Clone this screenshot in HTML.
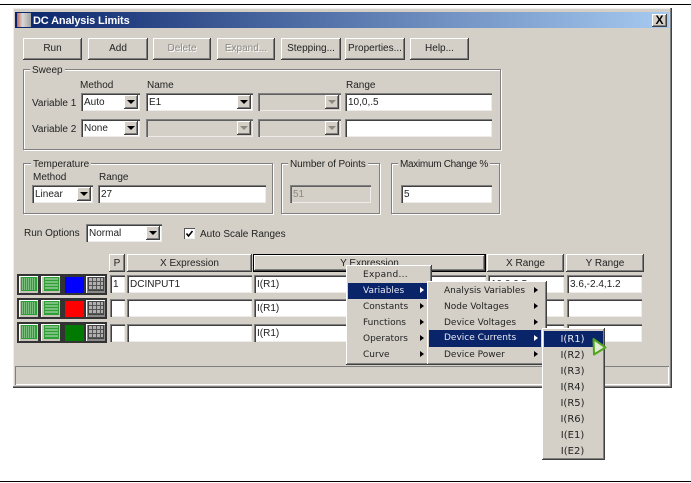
<!DOCTYPE html>
<html><head><meta charset="utf-8">
<style>
html,body{margin:0;padding:0;background:#fff}
#r{position:relative;width:691px;height:483px;overflow:hidden;background:#fff;font:10px "Liberation Sans",sans-serif;color:#222;filter:blur(.3px)}
#r div,#r span{position:absolute;box-sizing:border-box;white-space:nowrap}
.b{background:#d4d0c8;box-shadow:inset -1px -1px #404040,inset 1px 1px #fff,inset -2px -2px #808080;text-align:center;line-height:22px}
.dis{color:#8a8880;text-shadow:1px 1px #fff}
.i{background:#fff;box-shadow:inset 1px 1px #808080,inset 2px 2px #404040,inset -1px -1px #eeece8;line-height:19px;padding-left:3px}
.off{background:#d4d0c8;color:#8a8880;box-shadow:inset 1px 1px #808080,inset 2px 2px #606060,inset -1px -1px #eeece8}
.a{right:2px;top:2px;width:14px;height:14px;background:#d4d0c8;box-shadow:inset -1px -1px #404040,inset 1px 1px #fff,inset -2px -2px #808080}
.a:after{content:"";position:absolute;left:3px;top:5px;border:4px solid transparent;border-top:4px solid #000;border-bottom:0}
.a.g:after{border-top-color:#8a8880}
.g1{border:1px solid #808080;box-shadow:inset 1px 1px #fff,1px 1px #fff}
.l{background:#d4d0c8;padding:0 2px;height:12px;line-height:12px}
.t{line-height:12px;height:12px}
.h{background:#d4d0c8;box-shadow:inset -1px -1px #404040,inset 1px 1px #fff,inset -2px -2px #808080;text-align:center;line-height:19px}
.ib{width:23px;height:21px;background:#c8c4bc;border:2px solid #333;box-shadow:inset 1px 1px #fff}
.ib i{position:absolute;left:2px;top:1px;width:16px;height:14px;display:block}
.v{background:repeating-linear-gradient(90deg,#2c9f35 0,#2c9f35 1px,#7cc07f 1px,#7cc07f 2px);outline:1px solid #2c9f35;outline-offset:-1px}
.z{background:repeating-linear-gradient(180deg,#2c9f35 0,#2c9f35 1px,#7cc07f 1px,#7cc07f 3px);outline:1px solid #2c9f35;outline-offset:-1px}
.ib.cb{background:#777;box-shadow:none}
.ib.cb i{left:0;top:0;width:19px;height:16px;border:1px solid #333}
.k{background:repeating-linear-gradient(90deg,#555 0,#555 1px,transparent 1px,transparent 4px),repeating-linear-gradient(180deg,#555 0,#555 1px,#b0b0b0 1px,#b0b0b0 4px);outline:1px solid #444;outline-offset:-1px}
.ibg{background:#888}
.m{background:#d4d0c8;box-shadow:inset -1px -1px #404040,inset 1px 1px #fff,inset -2px -2px #808080;font:9px "DejaVu Sans",sans-serif;color:#222}
.mi{left:2px;height:16px;line-height:17px}
.sel{background:#0a246a;color:#e8e8f0}
.ar{width:0;height:0;border:3.5px solid transparent;border-left:4px solid #000;border-right:0}
.rule{left:0;width:691px;height:1px;background:#000}
</style></head><body>
<div id="r">
<div class="rule" style="top:4px"></div>
<div class="rule" style="top:481px"></div>

<div style="left:13px;top:8px;width:659px;height:380px;background:#d4d0c8;box-shadow:inset -1px -1px #404040,inset -2px -2px #808080,inset 1px 1px #eee"></div>
<div style="left:15px;top:12px;width:654px;height:16px;background:linear-gradient(90deg,#0a246a,#a6caf0)"></div>
<div style="left:17px;top:13px;width:14px;height:14px;background:linear-gradient(90deg,#c46a5a,#d8d8d8 40%,#a0a0a0)"></div>
<div style="left:33px;top:13px;height:16px;line-height:16px;color:#fff;font-weight:bold;font-size:11px;letter-spacing:-.15px">DC Analysis Limits</div>
<div class="b" style="left:652px;top:14px;width:15px;height:13px;font:bold 12px/13px 'Liberation Sans',sans-serif;color:#000">X</div>

<div class="b" style="left:23px;top:38px;width:59px;height:22px">Run</div>
<div class="b" style="left:88px;top:38px;width:60px;height:22px">Add</div>
<div class="b dis" style="left:153px;top:38px;width:58px;height:22px">Delete</div>
<div class="b dis" style="left:217px;top:38px;width:58px;height:22px">Expand...</div>
<div class="b" style="left:281px;top:38px;width:60px;height:22px">Stepping...</div>
<div class="b" style="left:345px;top:38px;width:60px;height:22px">Properties...</div>
<div class="b" style="left:410px;top:38px;width:59px;height:22px">Help...</div>

<div class="g1" style="left:23px;top:69px;width:478px;height:81px"></div>
<div class="l" style="left:30px;top:65px">Sweep</div>
<div class="t" style="left:80px;top:80px">Method</div>
<div class="t" style="left:147px;top:80px">Name</div>
<div class="t" style="left:346px;top:80px">Range</div>
<div class="t" style="left:32px;top:98px">Variable 1</div>
<div class="t" style="left:32px;top:124px">Variable 2</div>
<div class="i" style="left:81px;top:93px;width:59px;height:18px">Auto<span class="a"></span></div>
<div class="i" style="left:146px;top:93px;width:107px;height:18px">E1<span class="a"></span></div>
<div class="i off" style="left:258px;top:93px;width:83px;height:18px"><span class="a g"></span></div>
<div class="i" style="left:345px;top:93px;width:147px;height:18px">10,0,.5</div>
<div class="i" style="left:81px;top:119px;width:59px;height:18px">None<span class="a"></span></div>
<div class="i off" style="left:146px;top:119px;width:107px;height:18px"><span class="a g"></span></div>
<div class="i off" style="left:258px;top:119px;width:83px;height:18px"><span class="a g"></span></div>
<div class="i" style="left:345px;top:119px;width:147px;height:18px"></div>

<div class="g1" style="left:23px;top:163px;width:250px;height:51px"></div>
<div class="l" style="left:31px;top:159px">Temperature</div>
<div class="t" style="left:33px;top:172px">Method</div>
<div class="t" style="left:99px;top:172px">Range</div>
<div class="i" style="left:32px;top:185px;width:61px;height:18px">Linear<span class="a"></span></div>
<div class="i" style="left:98px;top:185px;width:168px;height:18px">27</div>

<div class="g1" style="left:281px;top:163px;width:99px;height:51px"></div>
<div class="l" style="left:288px;top:159px;letter-spacing:-.1px">Number of Points</div>
<div class="i off" style="left:290px;top:185px;width:81px;height:18px">51</div>

<div class="g1" style="left:391px;top:163px;width:109px;height:51px"></div>
<div class="l" style="left:398px;top:159px;letter-spacing:-.3px">Maximum Change %</div>
<div class="i" style="left:401px;top:185px;width:91px;height:18px">5</div>

<div class="t" style="left:24px;top:228px">Run Options</div>
<div class="i" style="left:86px;top:224px;width:76px;height:18px">Normal<span class="a"></span></div>
<div style="left:184px;top:228px;width:11px;height:11px;background:#fff;box-shadow:inset 1px 1px #555,inset -1px -1px #eee"></div>
<svg style="position:absolute;left:184px;top:228px" width="11" height="11"><path d="M2.5 5.5L4.5 8L8.5 3" fill="none" stroke="#000" stroke-width="1.6"/></svg>
<div class="t" style="left:200px;top:229px">Auto Scale Ranges</div>

<div class="h" style="left:109px;top:254px;width:16px;height:18px">P</div>
<div class="h" style="left:127px;top:254px;width:125px;height:18px">X Expression</div>
<div class="h" style="left:253px;top:254px;width:233px;height:18px;border:1px solid #000;line-height:17px">Y Expression</div>
<div class="h" style="left:487px;top:254px;width:77px;height:18px">X Range</div>
<div class="h" style="left:566px;top:254px;width:78px;height:18px">Y Range</div>

<div class="ib" style="left:17px;top:274px"><i class="v"></i></div>
<div class="ib" style="left:39px;top:274px"><i class="z" style="left:3px;width:15px"></i></div>
<div class="ib cb" style="left:62px;top:274px"><i style="background:#0000ff"></i></div>
<div class="ib ibg" style="left:84px;top:274px"><i class="k"></i></div>
<div class="ib" style="left:17px;top:298px"><i class="v"></i></div>
<div class="ib" style="left:39px;top:298px"><i class="z" style="left:3px;width:15px"></i></div>
<div class="ib cb" style="left:62px;top:298px"><i style="background:#ff0000"></i></div>
<div class="ib ibg" style="left:84px;top:298px"><i class="k"></i></div>
<div class="ib" style="left:17px;top:322px"><i class="v"></i></div>
<div class="ib" style="left:39px;top:322px"><i class="z" style="left:3px;width:15px"></i></div>
<div class="ib cb" style="left:62px;top:322px"><i style="background:#007a00"></i></div>
<div class="ib ibg" style="left:84px;top:322px"><i class="k"></i></div>

<div class="i" style="left:110px;top:275px;width:15px;height:18px">1</div>
<div class="i" style="left:127px;top:275px;width:125px;height:18px">DCINPUT1</div>
<div class="i" style="left:254px;top:275px;width:232px;height:18px">I(R1)</div>
<div class="i" style="left:488px;top:275px;width:76px;height:18px">10,0,0,5</div>
<div class="i" style="left:567px;top:275px;width:75px;height:18px">3.6,-2.4,1.2</div>
<div class="i" style="left:110px;top:299px;width:15px;height:18px"></div>
<div class="i" style="left:127px;top:299px;width:125px;height:18px"></div>
<div class="i" style="left:254px;top:299px;width:232px;height:18px">I(R1)</div>
<div class="i" style="left:488px;top:299px;width:76px;height:18px"></div>
<div class="i" style="left:567px;top:299px;width:75px;height:18px"></div>
<div class="i" style="left:110px;top:324px;width:15px;height:18px"></div>
<div class="i" style="left:127px;top:324px;width:125px;height:18px"></div>
<div class="i" style="left:254px;top:324px;width:232px;height:18px">I(R1)</div>
<div class="i" style="left:488px;top:324px;width:76px;height:18px"></div>
<div class="i" style="left:567px;top:324px;width:75px;height:18px"></div>

<div style="left:15px;top:366px;width:654px;height:19px;box-shadow:inset 1px 1px #808080,inset -1px -1px #fff"></div>

<div class="m" style="left:346px;top:265px;width:86px;height:100px">
<div class="mi" style="left:17px;top:2px;letter-spacing:.3px">Expand...</div>
<div class="mi sel" style="left:2px;top:18px;width:80px;padding-left:15px">Variables</div>
<div class="mi" style="left:17px;top:34px">Constants</div>
<div class="mi" style="left:17px;top:50px">Functions</div>
<div class="mi" style="left:17px;top:66px">Operators</div>
<div class="mi" style="left:17px;top:82px">Curve</div>
<div class="ar" style="left:74px;top:22px;border-left-color:#fff"></div>
<div class="ar" style="left:74px;top:38px"></div>
<div class="ar" style="left:74px;top:54px"></div>
<div class="ar" style="left:74px;top:70px"></div>
<div class="ar" style="left:74px;top:86px"></div>
</div>

<div class="m" style="left:427px;top:281px;width:120px;height:84px">
<div class="mi" style="left:17px;top:2px">Analysis Variables</div>
<div class="mi" style="left:17px;top:18px">Node Voltages</div>
<div class="mi" style="left:17px;top:34px">Device Voltages</div>
<div class="mi sel" style="left:2px;top:49px;width:112px;height:17px;padding-left:15px">Device Currents</div>
<div class="mi" style="left:17px;top:66px">Device Power</div>
<div class="ar" style="left:107px;top:6px"></div>
<div class="ar" style="left:107px;top:22px"></div>
<div class="ar" style="left:107px;top:38px"></div>
<div class="ar" style="left:107px;top:54px;border-left-color:#fff"></div>
<div class="ar" style="left:107px;top:70px"></div>
</div>

<div class="m" style="left:542px;top:328px;width:63px;height:132px;text-align:center;font-size:10px;padding-right:2px">
<div class="mi sel" style="left:2px;top:3px;width:59px;padding-right:2px">I(R1)</div>
<div class="mi" style="left:2px;top:19px;width:57px">I(R2)</div>
<div class="mi" style="left:2px;top:35px;width:57px">I(R3)</div>
<div class="mi" style="left:2px;top:51px;width:57px">I(R4)</div>
<div class="mi" style="left:2px;top:67px;width:57px">I(R5)</div>
<div class="mi" style="left:2px;top:83px;width:57px">I(R6)</div>
<div class="mi" style="left:2px;top:99px;width:57px">I(E1)</div>
<div class="mi" style="left:2px;top:115px;width:57px">I(E2)</div>
</div>

<svg style="position:absolute;left:590px;top:336px" width="18" height="22"><path d="M3.5 3L15.5 11.5L4 18.5Z" fill="#e0ecd4" stroke="#4fa51c" stroke-width="2" stroke-linejoin="round"/></svg>
</div>
</body></html>
